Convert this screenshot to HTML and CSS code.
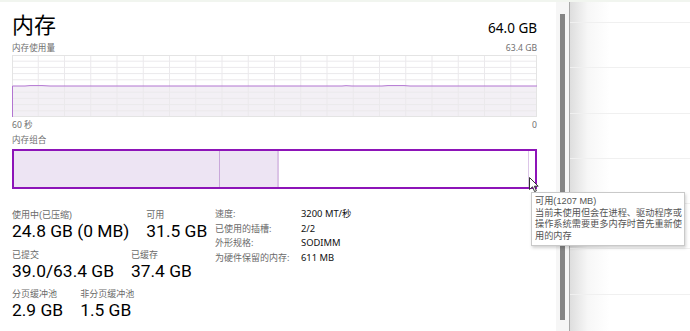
FILE: index.html
```html
<!DOCTYPE html>
<html lang="zh-CN">
<head>
  <meta charset="UTF-8">
  <title>内存 - 任务管理器</title>
  <link rel="stylesheet" href="styles.css">
</head>
<body>
  <div class="window">
    <div class="panel">
      <div class="head">
        <h1 class="title">内存</h1>
        <span class="total">64.0 GB</span>
      </div>
      <div class="caption-row">
        <span>内存使用量</span>
        <span>63.4 GB</span>
      </div>

      <svg class="graph" width="525" height="62" viewBox="0 0 525 62">
        <polygon class="graph-fill" points="0,31 13,31 18,30.6 30,30.6 38,31 330,31 334,30.7 340,31 370,31 376,30.6 392,30.6 398,31 525,31 525,62 0,62"/>
        <g class="grid">
          <line x1="26.25" y1="0" x2="26.25" y2="62"/>
          <line x1="52.5" y1="0" x2="52.5" y2="62"/>
          <line x1="78.75" y1="0" x2="78.75" y2="62"/>
          <line x1="105" y1="0" x2="105" y2="62"/>
          <line x1="131.25" y1="0" x2="131.25" y2="62"/>
          <line x1="157.5" y1="0" x2="157.5" y2="62"/>
          <line x1="183.75" y1="0" x2="183.75" y2="62"/>
          <line x1="210" y1="0" x2="210" y2="62"/>
          <line x1="236.25" y1="0" x2="236.25" y2="62"/>
          <line x1="262.5" y1="0" x2="262.5" y2="62"/>
          <line x1="288.75" y1="0" x2="288.75" y2="62"/>
          <line x1="315" y1="0" x2="315" y2="62"/>
          <line x1="341.25" y1="0" x2="341.25" y2="62"/>
          <line x1="367.5" y1="0" x2="367.5" y2="62"/>
          <line x1="393.75" y1="0" x2="393.75" y2="62"/>
          <line x1="420" y1="0" x2="420" y2="62"/>
          <line x1="446.25" y1="0" x2="446.25" y2="62"/>
          <line x1="472.5" y1="0" x2="472.5" y2="62"/>
          <line x1="498.75" y1="0" x2="498.75" y2="62"/>
          <line x1="0" y1="6.2" x2="525" y2="6.2"/>
          <line x1="0" y1="12.4" x2="525" y2="12.4"/>
          <line x1="0" y1="18.6" x2="525" y2="18.6"/>
          <line x1="0" y1="24.8" x2="525" y2="24.8"/>
          <line x1="0" y1="37.2" x2="525" y2="37.2"/>
          <line x1="0" y1="43.4" x2="525" y2="43.4"/>
          <line x1="0" y1="49.6" x2="525" y2="49.6"/>
          <line x1="0" y1="55.8" x2="525" y2="55.8"/>
        </g>
        <rect class="graph-frame" x="0.5" y="0.5" width="524" height="61"/>
        <polyline class="graph-line" points="0.5,62 0.5,31 13,31 18,30.6 30,30.6 38,31 330,31 334,30.7 340,31 370,31 376,30.6 392,30.6 398,31 525,31"/>
      </svg>

      <div class="caption-row">
        <span>60 秒</span>
        <span>0</span>
      </div>
      <div class="caption">内存组合</div>

      <div class="composition">
        <div class="seg seg-used"></div>
        <div class="seg seg-modified"></div>
        <div class="seg seg-standby"></div>
        <div class="seg seg-free"></div>
      </div>

      <div class="stats">
        <div class="stat-block">
          <div class="stat-row">
            <div class="stat">
              <div class="stat-label">使用中(已压缩)</div>
              <div class="stat-value">24.8 GB (0 MB)</div>
            </div>
            <div class="stat">
              <div class="stat-label">可用</div>
              <div class="stat-value">31.5 GB</div>
            </div>
          </div>
          <div class="stat-row">
            <div class="stat">
              <div class="stat-label">已提交</div>
              <div class="stat-value">39.0/63.4 GB</div>
            </div>
            <div class="stat">
              <div class="stat-label">已缓存</div>
              <div class="stat-value">37.4 GB</div>
            </div>
          </div>
          <div class="stat-row">
            <div class="stat">
              <div class="stat-label">分页缓冲池</div>
              <div class="stat-value">2.9 GB</div>
            </div>
            <div class="stat">
              <div class="stat-label">非分页缓冲池</div>
              <div class="stat-value">1.5 GB</div>
            </div>
          </div>
        </div>

        <dl class="details">
          <dt>速度:</dt><dd>3200 MT/秒</dd>
          <dt>已使用的插槽:</dt><dd>2/2</dd>
          <dt>外形规格:</dt><dd>SODIMM</dd>
          <dt>为硬件保留的内存:</dt><dd>611 MB</dd>
        </dl>
      </div>

      <!-- mouse pointer hovering the free segment -->
      <svg class="pointer" width="11" height="17" viewBox="0 0 11 17">
        <path d="M0.5 0.5 L0.5 12.5 L3.5 9.8 L5.6 14.6 L7.4 13.8 L5.4 9.2 L9.2 9.2 Z"/>
      </svg>

      <div class="tooltip">
        <div class="tip-line">可用(1207 MB)</div>
        <div class="tip-line">当前未使用但会在进程、驱动程序或</div>
        <div class="tip-line">操作系统需要更多内存时首先重新使</div>
        <div class="tip-line">用的内存</div>
      </div>
    </div>

    <div class="scroll-track">
      <div class="scroll-thumb"></div>
    </div>

    <div class="side">
      <div class="side-row"></div>
      <div class="side-row"></div>
      <div class="side-row"></div>
      <div class="side-row"></div>
      <div class="side-row"></div>
      <div class="side-row"></div>
      <div class="side-row"></div>
    </div>
  </div>
</body>
</html>
```

FILE: styles.css
```css
* {
  box-sizing: border-box;
  margin: 0;
  padding: 0;
}

body {
  width: 690px;
  height: 331px;
  overflow: hidden;
  background: #fff;
  color: #000;
  font-family: "Noto Sans", "Noto Sans CJK SC", sans-serif;
}

.window {
  display: flex;
  height: 331px;
  border-top: 2px solid #f1f5ef;
}

.panel {
  position: relative;
  width: 556px;
  padding: 0 19px 0 12px;
}

.head {
  display: flex;
  justify-content: space-between;
  align-items: baseline;
  height: 40px;
  padding-top: 8px;
}

.title {
  font-size: 22px;
  font-weight: 400;
  line-height: 26px;
  font-family: "Noto Sans CJK SC", sans-serif;
}

.total {
  font-size: 13.5px;
  line-height: 18px;
}

.caption-row {
  display: flex;
  justify-content: space-between;
  font-size: 8.6px;
  line-height: 12px;
  color: #707070;
}

.caption {
  font-size: 8.6px;
  line-height: 12px;
  color: #707070;
  margin-top: 3px;
}

.graph {
  display: block;
  margin-top: 1px;
  margin-bottom: 2px;
}

.graph-fill {
  fill: #f3f0f5;
}

.grid line {
  stroke: #ebe9ec;
  stroke-width: 1;
}

.graph-frame {
  fill: none;
  stroke: #e4e4e4;
}

.graph-line {
  fill: none;
  stroke: #b274d1;
  stroke-width: 1;
}

.composition {
  display: flex;
  height: 40px;
  margin-top: 3px;
  border: 2px solid #8d14b8;
}

.seg {
  height: 100%;
}

.seg-used {
  width: 206px;
  background: #ede4f3;
  border-right: 1px solid #c9a7da;
}

.seg-modified {
  width: 59px;
  background: #ede4f3;
  border-right: 2px solid #dbc3e6;
}

.seg-standby {
  width: 250px;
  border-right: 1px solid #dcc6e8;
}

.seg-free {
  flex: 1;
}

.stats {
  display: flex;
  margin-top: 21px;
}

.stat-block {
  width: 203px;
}

.stat-row {
  display: flex;
  gap: 17px;
  height: 39.5px;
}

.stat-label {
  font-family: "Liberation Sans", "Noto Sans CJK SC", sans-serif;
  font-size: 9px;
  line-height: 11px;
  color: #6a6a6a;
}

.stat-value {
  font-family: Roboto, sans-serif;
  font-size: 17.4px;
  line-height: 16px;
  margin-top: 2px;
}

.details {
  display: grid;
  grid-template-columns: 86px auto;
  grid-auto-rows: 14.7px;
  font-size: 9px;
  line-height: 14.7px;
  margin-top: -3px;
}

.details dt {
  color: #6a6a6a;
}

.details dd {
  color: #111;
  font-size: 9.4px;
}

.pointer {
  position: absolute;
  left: 529px;
  top: 175px;
}

.pointer path {
  fill: #fff;
  stroke: #333;
  stroke-width: 1;
  stroke-linejoin: round;
}

.tooltip {
  position: absolute;
  left: 531px;
  top: 190px;
  width: 154px;
  padding: 3px 0 3px 3px;
  background: #fff;
  border: 1px solid #c9c9c9;
  box-shadow: 1px 2px 3px rgba(0, 0, 0, 0.18);
  font-family: "Liberation Sans", "Noto Sans CJK SC", sans-serif;
  font-size: 9.2px;
  color: #555;
  white-space: nowrap;
  z-index: 2;
}

.tip-line {
  height: 11.6px;
  line-height: 11.6px;
}

.scroll-track {
  width: 13px;
  padding: 12px 3px 0 4px;
  background: #f6f6f6;
}

.scroll-thumb {
  width: 5px;
  height: 306px;
  background: #858585;
}

.side {
  flex: 1;
  padding-top: 20px;
  border-left: 1px solid #a8a8a8;
  background: linear-gradient(to right, #dedede, #f7f7f7 18px, #fff 40px);
}

.side-row {
  height: 45.3px;
  border-top: 1px solid #f0f0f0;
}
```
